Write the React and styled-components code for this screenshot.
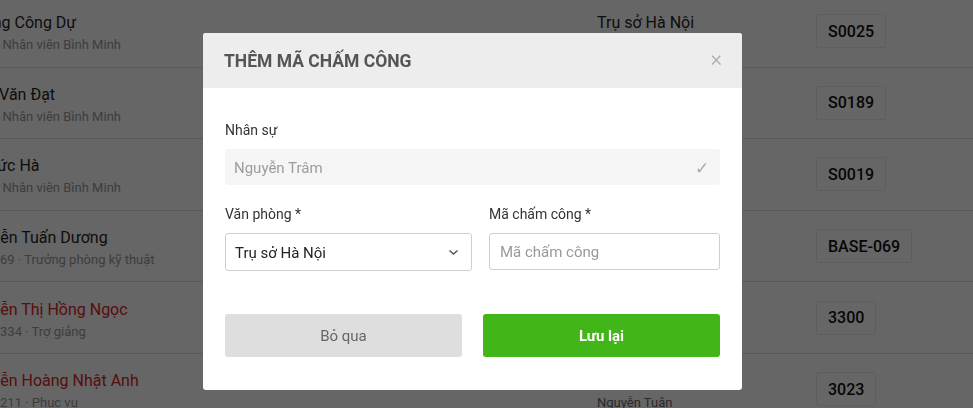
import React from "react";
import styled, { createGlobalStyle } from "styled-components";

const Global = createGlobalStyle`
  html, body { margin: 0; padding: 0; background: #fff; overflow: hidden; }
  body { font-family: Roboto, "Noto Sans", "Liberation Sans", sans-serif; color: #222; }
  * { box-sizing: border-box; }
`;

const Page = styled.div`
  width: 973px;
  height: 408px;
  overflow: hidden;
`;

const Table = styled.div`
  margin: -4px 0 0 -36.5px;
  display: flex;
  flex-direction: column;
`;

const Row = styled.div`
  display: grid;
  grid-template-columns: 633.5px 219px 1fr;
  align-items: center;
  height: 71.6px;
  border-bottom: 1px solid #e2e2e2;
`;

const Cell = styled.div`
  display: flex;
  flex-direction: column;
  gap: 4px;
  margin-top: 6px;
  white-space: nowrap;
`;

const Name = styled.div`
  font-size: 16px;
  line-height: 18px;
  color: ${(p) => (p.$danger ? "#d92626" : "#1f1f1f")};
`;

const Sub = styled.div`
  font-size: 13px;
  line-height: 18px;
  color: #999;
`;

const Office = styled.div`
  font-size: 16px;
  line-height: 18px;
  color: #1f1f1f;
`;

const Manager = styled.div`
  font-size: 13px;
  line-height: 18px;
  color: #6a6a6a;
`;

const Badge = styled.span`
  justify-self: start;
  display: inline-flex;
  align-items: center;
  height: 34px;
  padding: 0 11px;
  border: 1px solid #ebebeb;
  border-radius: 2px;
  font-size: 16px;
  font-weight: 500;
  color: #111;
`;

const Overlay = styled.div`
  position: fixed;
  inset: 0;
  background: rgba(0, 0, 0, 0.6);
  display: flex;
  align-items: flex-start;
  padding: 33px 0 0 203px;
`;

const Modal = styled.div`
  width: 539px;
  background: #fff;
  border-radius: 3px;
  overflow: hidden;
`;

const Header = styled.div`
  height: 55px;
  background: #ededed;
  display: flex;
  align-items: center;
  justify-content: space-between;
  padding: 0 20px 0 21px;
`;

const Title = styled.div`
  font-size: 17.5px;
  font-weight: 700;
  color: #555;
`;

const Close = styled.span`
  font-size: 22px;
  line-height: 1;
  color: #aaa;
  font-weight: 300;
  margin-top: -4px;
`;

const Body = styled.div`
  padding: 33px 22px 33px 22px;
  display: flex;
  flex-direction: column;
`;

const Field = styled.div`
  display: flex;
  flex-direction: column;
  gap: 10px;
`;

const Label = styled.label`
  font-size: 14px;
  line-height: 18px;
  color: #333;
`;

const Grid = styled.div`
  display: grid;
  grid-template-columns: 247px 1fr;
  column-gap: 17px;
  margin-top: 20px;
`;

const Disabled = styled.div`
  height: 36px;
  background: #f5f5f5;
  border-radius: 3px;
  display: flex;
  align-items: center;
  justify-content: space-between;
  padding: 1px 11px 0 9px;
  font-size: 15px;
  color: #9c9c9c;
`;

const Check = styled.span`
  color: #ababab;
  font-size: 17px;
`;

const Select = styled.div`
  height: 38px;
  border: 1px solid #cfcfcf;
  border-radius: 3px;
  display: flex;
  align-items: center;
  justify-content: space-between;
  padding: 1px 12px 0 9px;
  font-size: 15px;
  color: #222;
`;

const Input = styled.input`
  height: 37px;
  border: 1px solid #cfcfcf;
  border-radius: 3px;
  padding: 0 10px;
  font-size: 15px;
  font-family: inherit;
  color: #222;
  outline: none;
  &::placeholder { color: #999; }
`;

const Actions = styled.div`
  display: grid;
  grid-template-columns: 1fr 1fr;
  column-gap: 21px;
  margin-top: 43px;
`;

const Button = styled.button`
  height: 43px;
  border: none;
  border-radius: 3px;
  font-family: inherit;
  font-size: 15px;
  background: ${(p) => (p.$primary ? "#42b618" : "#dedede")};
  color: ${(p) => (p.$primary ? "#fff" : "#666")};
  font-weight: ${(p) => (p.$primary ? 700 : 400)};
`;

const rows = [
  { name: "Hoàng Công Dự", sub: "0025 · Nhân viên Bình Minh", office: "Trụ sở Hà Nội", manager: "Nguyễn Tuân", code: "S0025" },
  { name: "Trần Văn Đạt", sub: "0189 · Nhân viên Bình Minh", office: "Trụ sở Hà Nội", manager: "Nguyễn Tuân", code: "S0189" },
  { name: "Võ Đức Hà", sub: "0019 · Nhân viên Bình Minh", office: "Trụ sở Hà Nội", manager: "Nguyễn Tuân", code: "S0019" },
  { name: "Nguyễn Tuấn Dương", sub: "0000069 · Trưởng phòng kỹ thuật", office: "Trụ sở Hà Nội", manager: "Nguyễn Tuân", code: "BASE-069" },
  { name: "Nguyễn Thị Hồng Ngọc", sub: "00000334 · Trợ giảng", office: "Trụ sở Hà Nội", manager: "Nguyễn Tuân", code: "3300", danger: true },
  { name: "Nguyễn Hoàng Nhật Anh", sub: "00000211 · Phục vụ", office: "Trụ sở Hà Nội", manager: "Nguyễn Tuân", code: "3023", danger: true },
];

export default function App() {
  return (
    <Page>
      <Global />
      <Table>
        {rows.map((r) => (
          <Row key={r.code}>
            <Cell>
              <Name $danger={r.danger}>{r.name}</Name>
              <Sub>{r.sub}</Sub>
            </Cell>
            <Cell>
              <Office>{r.office}</Office>
              <Manager>{r.manager}</Manager>
            </Cell>
            <Badge>{r.code}</Badge>
          </Row>
        ))}
      </Table>
      <Overlay>
        <Modal>
          <Header>
            <Title>THÊM MÃ CHẤM CÔNG</Title>
            <Close>×</Close>
          </Header>
          <Body>
            <Field>
              <Label>Nhân sự</Label>
              <Disabled>
                Nguyễn Trâm
                <Check>✓</Check>
              </Disabled>
            </Field>
            <Grid>
              <Field>
                <Label>Văn phòng *</Label>
                <Select>
                  Trụ sở Hà Nội
                  <svg width="11" height="7" viewBox="0 0 11 7">
                    <path d="M1.5 1.5 L5.5 5 L9.5 1.5" fill="none" stroke="#555" strokeWidth="1.5" />
                  </svg>
                </Select>
              </Field>
              <Field>
                <Label>Mã chấm công *</Label>
                <Input placeholder="Mã chấm công" />
              </Field>
            </Grid>
            <Actions>
              <Button>Bỏ qua</Button>
              <Button $primary>Lưu lại</Button>
            </Actions>
          </Body>
        </Modal>
      </Overlay>
    </Page>
  );
}
